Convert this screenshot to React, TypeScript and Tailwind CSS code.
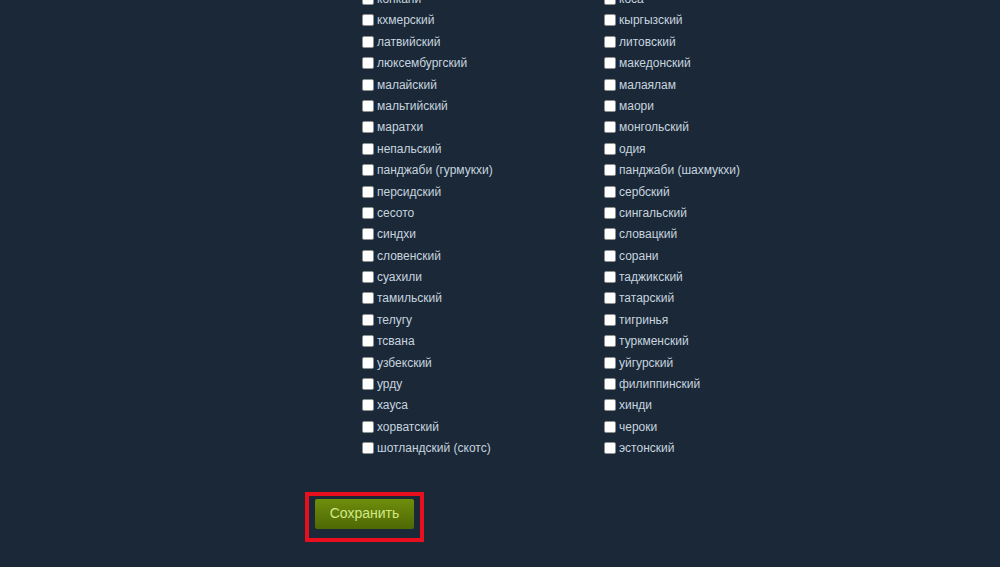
const leftColumn = [
  "конкани",
  "кхмерский",
  "латвийский",
  "люксембургский",
  "малайский",
  "мальтийский",
  "маратхи",
  "непальский",
  "панджаби (гурмукхи)",
  "персидский",
  "сесото",
  "синдхи",
  "словенский",
  "суахили",
  "тамильский",
  "телугу",
  "тсвана",
  "узбекский",
  "урду",
  "хауса",
  "хорватский",
  "шотландский (скотс)",
];

const rightColumn = [
  "коса",
  "кыргызский",
  "литовский",
  "македонский",
  "малаялам",
  "маори",
  "монгольский",
  "одия",
  "панджаби (шахмукхи)",
  "сербский",
  "сингальский",
  "словацкий",
  "сорани",
  "таджикский",
  "татарский",
  "тигринья",
  "туркменский",
  "уйгурский",
  "филиппинский",
  "хинди",
  "чероки",
  "эстонский",
];

const LanguageRow = ({ label }: { label: string }) => (
  <label className="flex h-[21.4px] items-center">
    <span className="mr-[3px] block h-[12px] w-[12px] shrink-0 rounded-[2px] border border-[#8f8f8f] bg-white" />
    <span className="text-[12px] leading-none text-[#c6d4df]">{label}</span>
  </label>
);

export default function App() {
  return (
    <div
      className="h-[567px] overflow-hidden bg-[#1b2838]"
      style={{ fontFamily: '"Liberation Sans", Arial, sans-serif' }}
    >
      <div className="ml-[305px] -mt-[11.7px]">
        {/* список языков */}
        <div className="ml-[57px] grid grid-cols-[242px_242px]">
          {leftColumn.map((lang, i) => (
            <div key={lang} className="contents">
              <LanguageRow label={lang} />
              <LanguageRow label={rightColumn[i]} />
            </div>
          ))}
        </div>

        <div className="mt-[33px] inline-block border-[4px] border-[#e8101f] px-[6px] pt-[3px] pb-[9px]">
          <button className="block h-[30px] w-[99px] rounded-[2px] bg-gradient-to-b from-[#6f8e0c] to-[#4e6905] text-[14px] text-[#d2e885]">
            Сохранить
          </button>
        </div>
      </div>
    </div>
  );
}
